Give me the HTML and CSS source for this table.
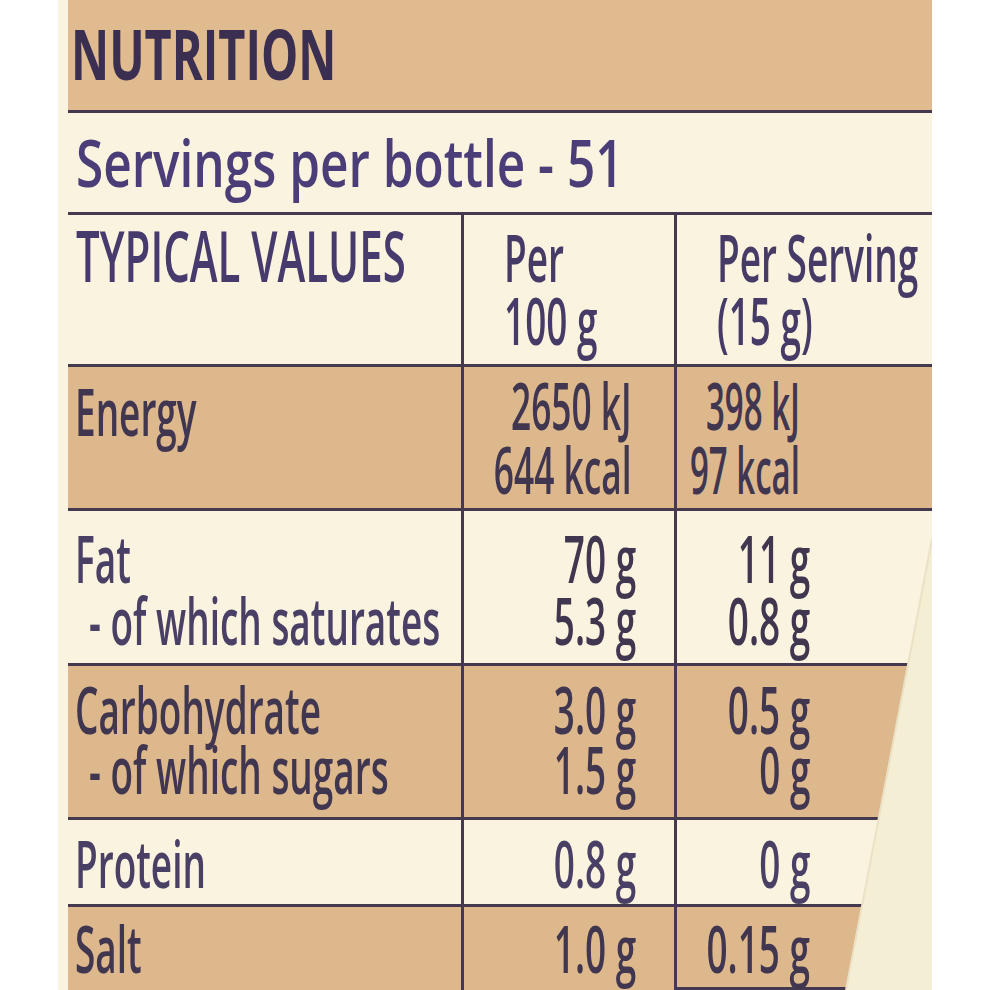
FILE: index.html
```html
<!DOCTYPE html>
<html lang="en">
<head>
<meta charset="utf-8">
<title>Nutrition</title>
<link rel="stylesheet" href="styles.css">
</head>
<body>
<div class="label">
  <div class="title"><span class="c t-title">NUTRITION</span></div>
  <div class="servings"><span class="c t-serv">Servings per bottle - 51</span></div>

  <div class="row head">
    <div class="cell name"><span class="c t-typ">TYPICAL VALUES</span></div>
    <div class="cell col2">
      <div class="ln"><span class="c b">Per</span></div>
      <div class="ln"><span class="c b">100 g</span></div>
    </div>
    <div class="cell col3">
      <div class="ln"><span class="c b">Per Serving</span></div>
      <div class="ln"><span class="c b">(15 g)</span></div>
    </div>
  </div>

  <div class="row tan energy">
    <div class="cell name"><div class="ln"><span class="c b">Energy</span></div></div>
    <div class="cell col2 val">
      <div class="ln"><span class="c b r">2650 kJ</span></div>
      <div class="ln"><span class="c b r">644 kcal</span></div>
    </div>
    <div class="cell col3 val">
      <div class="ln"><span class="c b r">398 kJ</span></div>
      <div class="ln"><span class="c b r">97 kcal</span></div>
    </div>
  </div>

  <div class="row fat">
    <div class="cell name">
      <div class="ln"><span class="c b">Fat</span></div>
      <div class="ln sub"><span class="c b">- of which saturates</span></div>
    </div>
    <div class="cell col2 val">
      <div class="ln"><span class="c b r">70 g</span></div>
      <div class="ln"><span class="c b r">5.3 g</span></div>
    </div>
    <div class="cell col3 val">
      <div class="ln"><span class="c b r">11 g</span></div>
      <div class="ln"><span class="c b r">0.8 g</span></div>
    </div>
  </div>

  <div class="row tan carb">
    <div class="cell name">
      <div class="ln"><span class="c b">Carbohydrate</span></div>
      <div class="ln sub"><span class="c b">- of which sugars</span></div>
    </div>
    <div class="cell col2 val">
      <div class="ln"><span class="c b r">3.0 g</span></div>
      <div class="ln"><span class="c b r">1.5 g</span></div>
    </div>
    <div class="cell col3 val">
      <div class="ln"><span class="c b r">0.5 g</span></div>
      <div class="ln"><span class="c b r">0 g</span></div>
    </div>
  </div>

  <div class="row protein">
    <div class="cell name"><div class="ln"><span class="c b">Protein</span></div></div>
    <div class="cell col2 val"><div class="ln"><span class="c b r">0.8 g</span></div></div>
    <div class="cell col3 val"><div class="ln"><span class="c b r">0 g</span></div></div>
  </div>

  <div class="row tan salt">
    <div class="cell name"><div class="ln"><span class="c b">Salt</span></div></div>
    <div class="cell col2 val"><div class="ln"><span class="c b r">1.0 g</span></div></div>
    <div class="cell col3 val"><div class="ln"><span class="c b r">0.15 g</span></div></div>
  </div>

  <svg class="fold" width="874" height="990" viewBox="0 0 874 990" aria-hidden="true">
    <polygon points="874,539 788,990 874,990" fill="#f4eed5"/>
    <line x1="874" y1="539" x2="788" y2="990" stroke="#ebe2c6" stroke-width="2"/>
  </svg>
</div>
</body>
</html>
```

FILE: styles.css
```css
html, body {
  margin: 0;
  padding: 0;
  background: #ffffff;
  overflow: hidden;
}

* { box-sizing: border-box; }

.label {
  position: relative;
  margin-left: 58px;
  width: 874px;
  height: 990px;
  padding-left: 10px;
  background: #f9f3df;
  overflow: hidden;
  font-family: "Open Sans", "Noto Sans", sans-serif;
  white-space: nowrap;
}

.c {
  display: inline-block;
  transform-origin: left center;
}

.c.r { transform-origin: right center; }

.title {
  height: 113px;
  background: #e0bb90;
  border-bottom: 3px solid #45394f;
  padding: 18px 0 0 3px;
}

.t-title {
  font-size: 70px;
  line-height: 70px;
  font-weight: 700;
  color: #3a2f50;
  transform: scaleX(0.67);
}

.servings {
  height: 102px;
  border-bottom: 3px solid #45394f;
  padding: 15px 0 0 8px;
}

.t-serv {
  font-size: 66px;
  line-height: 66px;
  font-weight: 600;
  color: #4b3e78;
  transform: scaleX(0.75);
}

.row {
  display: grid;
  grid-template-columns: 393px 213px minmax(0, 1fr);
  border-bottom: 3px solid #45394f;
}

.row.tan { background: #ddb88d; }

.cell { min-width: 0; }
.cell + .cell { border-left: 3px solid #45394f; }

.ln {
  height: 62px;
  min-width: 0;
}

.b {
  font-size: 66px;
  line-height: 62px;
  font-weight: 600;
  color: #41364f;
  transform: scaleX(0.56);
}

.name { padding-left: 7px; }
.sub { padding-left: 14px; }

.val .ln {
  display: flex;
  justify-content: flex-end;
}
.val .c { flex: none; }
.col2.val { padding-right: 38px; }
.col3.val { padding-right: 122px; }

/* header row */
.head { height: 152px; }
.head .cell { padding-top: 10px; }
.head .name { padding-top: 9px; padding-left: 8px; }
.head .ln { height: 63px; }
.head .b { line-height: 63px; color: #463b66; }
.head .col2 { padding-left: 40px; }
.head .col3 { padding-left: 40px; }

.t-typ {
  font-size: 70px;
  line-height: 63px;
  font-weight: 600;
  color: #463b6c;
  transform: scaleX(0.6);
}

.energy { height: 144px; }
.energy .name { padding-top: 12px; }
.energy .val { padding-top: 5px; }
.energy .col2.val { padding-right: 42px; }
.energy .col2 .b { transform: scaleX(0.535); }
.energy .col3.val { padding-right: 132px; }
.energy .col3 .b { transform: scaleX(0.5); }
.energy .val .ln { height: 64px; }
.energy .val .b { line-height: 64px; }

.fat { height: 155px; }
.fat .cell { padding-top: 15px; }
.fat .name .b { color: #4a4066; }

.carb { height: 154px; }
.carb .cell { padding-top: 12px; }
.carb .ln { height: 60px; }
.carb .b { line-height: 60px; }

.protein { height: 87px; }
.protein .cell { padding-top: 11px; }
.protein .b { color: #4a4066; }

.salt { height: 83px; border-bottom: none; }
.salt .cell { padding-top: 9px; }
.salt .col3 { border-bottom: 3px solid #45394f; }

.fold {
  position: absolute;
  left: 0;
  top: 0;
  pointer-events: none;
}
```
